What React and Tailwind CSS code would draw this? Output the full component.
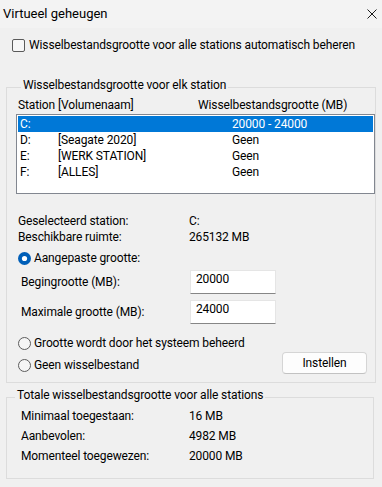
export default function App() {
  const rows = [
    { d: "C:", n: "", s: "20000 - 24000", sel: true },
    { d: "D:", n: "[Seagate 2020]", s: "Geen" },
    { d: "E:", n: "[WERK STATION]", s: "Geen" },
    { d: "F:", n: "[ALLES]", s: "Geen" },
  ];
  const Radio = ({ on }) =>
    on ? (
      <svg width="13" height="13" viewBox="0 0 13 13" className="shrink-0">
        <circle cx="6.5" cy="6.5" r="6.5" fill="#005fb8" />
        <circle cx="6.5" cy="6.5" r="2.6" fill="#ffffff" />
      </svg>
    ) : (
      <svg width="13" height="13" viewBox="0 0 13 13" className="shrink-0">
        <circle cx="6.5" cy="6.5" r="6" fill="#f5f5f5" stroke="#5c5c5c" strokeWidth="1" />
      </svg>
    );
  return (
    <div className="w-[382px] h-[487px] bg-[#f0f0f0] font-['Roboto',sans-serif] text-[12px] leading-[16px] tracking-[-0.12px] text-black overflow-hidden">
      <div className="h-[28px] bg-[#f3f3f3] flex items-center justify-between pl-[3px] pr-[5px]">
        <span className="text-[13px] leading-[18px] tracking-normal">Virtueel geheugen</span>
        <svg width="10" height="10" viewBox="0 0 10 10">
          <path d="M0.5 0.5L9.5 9.5M9.5 0.5L0.5 9.5" stroke="#1a1a1a" strokeWidth="1" />
        </svg>
      </div>

      <label className="mt-[9px] ml-[12px] flex items-center gap-[4px] h-[16px]">
        <span className="w-[13px] h-[13px] border border-[#5a5a5a] rounded-[2px] bg-[#f7f7f7] shrink-0" />
        <span>Wisselbestandsgrootte voor alle stations automatisch beheren</span>
      </label>

      <fieldset className="mt-[24px] ml-[6px] w-[368px] border border-[#dcdcdc] pl-[9px] pb-[9px]">
        <legend className="ml-[5px] px-[2px] pb-[4px] leading-[16px]">
          Wisselbestandsgrootte voor elk station
        </legend>
        <div className="flex h-[16px] pl-[2px]">
          <span className="w-[180px]">Station [Volumenaam]</span>
          <span>Wisselbestandsgrootte (MB)</span>
        </div>
        <div className="mt-[1px] w-[359px] h-[80px] border border-[#828790] bg-white p-[1px]">
          {rows.map((r) => (
            <div
              key={r.d}
              className={
                "flex h-[16px] pl-[2px] " + (r.sel ? "bg-[#0078d7] text-white" : "")
              }
            >
              <span className="w-[38px]">{r.d}</span>
              <span className="w-[174px]">{r.n}</span>
              <span>{r.s}</span>
            </div>
          ))}
        </div>

        <div className="mt-[19px] pl-[2px] flex flex-col">
          <div className="flex h-[16px]">
            <span className="w-[171px]">Geselecteerd station:</span>
            <span>C:</span>
          </div>
          <div className="flex h-[16px]">
            <span className="w-[171px]">Beschikbare ruimte:</span>
            <span>265132 MB</span>
          </div>
        </div>

        <div className="mt-[5px] pl-[2px] flex items-center gap-[3px] h-[16px]">
          <Radio on />
          <span>Aangepaste grootte:</span>
        </div>

        <div className="mt-[4px] pl-[5px] flex items-center h-[24px]">
          <span className="w-[169px]">Begingrootte (MB):</span>
          <div className="w-[86px] h-[24px] bg-white border border-[#e5e5e5] border-b-[#868686] pl-[5px]">
            20000
          </div>
        </div>
        <div className="mt-[6px] pl-[5px] flex items-center h-[24px]">
          <span className="w-[169px]">Maximale grootte (MB):</span>
          <div className="w-[86px] h-[24px] bg-white border border-[#e5e5e5] border-b-[#868686] pl-[5px]">
            24000
          </div>
        </div>

        <div className="mt-[11px] pl-[2px] flex items-end justify-between pr-[8px]">
          <div className="flex flex-col gap-[6px]">
            <div className="flex items-center gap-[3px] h-[16px]">
              <Radio />
              <span>Grootte wordt door het systeem beheerd</span>
            </div>
            <div className="flex items-center gap-[3px] h-[16px]">
              <Radio />
              <span>Geen wisselbestand</span>
            </div>
          </div>
          <button className="mb-[-1px] w-[85px] h-[22px] rounded-[4px] bg-[#fdfdfd] border border-[#d5d5d5] border-b-[#c2c2c2] text-[12px] leading-[16px]">
            Instellen
          </button>
        </div>
      </fieldset>

      <fieldset className="mt-[4px] ml-[6px] w-[368px] border border-[#dcdcdc] pl-[14px] pb-[14px]">
        <legend className="ml-[-6px] px-[2px] pb-[4px] leading-[16px]">
          Totale wisselbestandsgrootte voor alle stations
        </legend>
        <div className="flex flex-col gap-[4px] pt-[1px]">
          <div className="flex h-[16px]">
            <span className="w-[168px]">Minimaal toegestaan:</span>
            <span>16 MB</span>
          </div>
          <div className="flex h-[16px]">
            <span className="w-[168px]">Aanbevolen:</span>
            <span>4982 MB</span>
          </div>
          <div className="flex h-[16px]">
            <span className="w-[168px]">Momenteel toegewezen:</span>
            <span>20000 MB</span>
          </div>
        </div>
      </fieldset>
    </div>
  );
}
